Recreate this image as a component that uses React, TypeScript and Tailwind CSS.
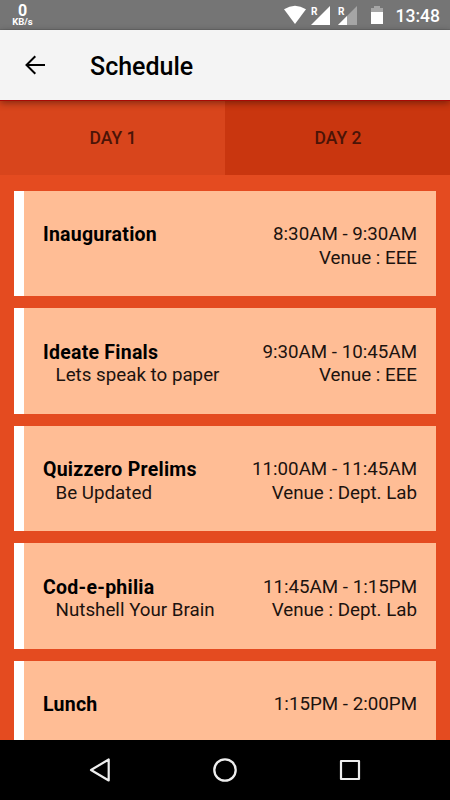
import React from 'react';

type ScheduleItem = {
  title: string;
  subtitle?: string;
  time: string;
  venue?: string;
};

const items: ScheduleItem[] = [
  { title: 'Inauguration', time: '8:30AM - 9:30AM', venue: 'EEE' },
  { title: 'Ideate Finals', subtitle: 'Lets speak to paper', time: '9:30AM - 10:45AM', venue: 'EEE' },
  { title: 'Quizzero Prelims', subtitle: 'Be Updated', time: '11:00AM - 11:45AM', venue: 'Dept. Lab' },
  { title: 'Cod-e-philia', subtitle: 'Nutshell Your Brain', time: '11:45AM - 1:15PM', venue: 'Dept. Lab' },
  { title: 'Lunch', time: '1:15PM - 2:00PM' },
];

const StatusBar: React.FC = () => (
  <div className="flex h-[30px] shrink-0 items-start justify-between border-b border-[#6a6a6a] bg-[#757575] pl-[11px] pr-[10px] text-white">
    <div className="flex w-[23px] flex-col items-center pt-[3px] font-bold">
      <span className="block h-[14px] text-[16px] leading-[16px]">0</span>
      <span className="block h-[10px] text-[9.5px] leading-[10px]">KB/s</span>
    </div>
    <div className="flex items-start">
      <svg className="h-[30px] w-[101px]" viewBox="0 0 101 30">
        <path d="M0 9.3Q11 2.2 22 9.3L11 24Z" fill="#fff" />
        <path d="M46 6v19H27Z" fill="#fff" />
        <path d="M73 6v19H54Z" fill="#a5a5a5" />
        <path d="M54 25l9-9v9Z" fill="#fff" />
        <text x="27" y="15" fontSize="10.5" fontWeight="700" fill="#fff" textLength="6.5" lengthAdjust="spacingAndGlyphs">R</text>
        <text x="54" y="15" fontSize="10.5" fontWeight="700" fill="#fff" textLength="6.5" lengthAdjust="spacingAndGlyphs">R</text>
        <path d="M90 6h6v2h3v4H87V8h3Z" fill="#a5a5a5" />
        <path d="M87 12h12v12H87Z" fill="#fff" />
      </svg>
      <span className="w-[55px] pt-[5px] text-right text-[17.5px] font-medium leading-[22px]">13:48</span>
    </div>
  </div>
);

const Header: React.FC = () => (
  <header className="relative z-10 flex h-[71px] shrink-0 items-center border-b border-[#a80a05] bg-[#f4f4f4] shadow-[0_2px_7px_rgba(0,0,0,0.4)]">
    <svg className="ml-[25px] h-5 w-5" viewBox="0 0 20 20" fill="none" stroke="#000" strokeWidth="2">
      <path d="M20 10H2M10.3 1.2L1.5 10l8.8 8.8" />
    </svg>
    <h1 className="ml-[45px] pt-[4px] text-[25px] font-medium leading-[30px] text-black">Schedule</h1>
  </header>
);

const Tabs: React.FC = () => (
  <div className="flex h-[74px] shrink-0 text-[17.5px] font-medium text-[#4b1407]">
    <button className="flex-1 bg-[#d8451c] pl-px pt-[1px]">DAY 1</button>
    <button className="flex-1 bg-[#c9360f] pl-px pt-[1px]">DAY 2</button>
  </div>
);

const ScheduleCard: React.FC<{ item: ScheduleItem }> = ({ item }) => (
  <div className="flex h-[105.3px] shrink-0 justify-between border-l-10 border-white bg-[#ffbd95] pl-[19.4px] pr-[19.4px] pt-[32.4px] text-[18.75px] leading-[23.5px] text-[#1c130f]">
    <div>
      <h2 className="text-[19.5px] font-bold tracking-[0.25px] text-black">{item.title}</h2>
      {item.subtitle && <p className="pl-[12.6px]">{item.subtitle}</p>}
    </div>
    <div className="text-right">
      <p>{item.time}</p>
      {item.venue && <p>Venue : {item.venue}</p>}
    </div>
  </div>
);

const NavigationBar: React.FC = () => (
  <div className="flex h-[60px] shrink-0 items-center justify-between bg-black px-[87px]">
    <svg className="h-[26px] w-[26px]" viewBox="0 0 26 26" fill="none" stroke="#eee" strokeWidth="2.2" strokeLinejoin="round">
      <path d="M21.7 2.5v21L4 13Z" />
    </svg>
    <svg className="h-[26px] w-[26px]" viewBox="0 0 26 26" fill="none" stroke="#eee" strokeWidth="2.3">
      <circle cx="13" cy="13" r="10.7" />
    </svg>
    <svg className="h-[26px] w-[26px]" viewBox="0 0 26 26" fill="none" stroke="#eee" strokeWidth="2.2" strokeLinejoin="round">
      <path d="M4 4h18v18H4Z" />
    </svg>
  </div>
);

const App: React.FC = () => {
  return (
    <div className="flex h-[800px] w-[450px] flex-col overflow-hidden bg-[#e44b20] font-['Roboto',sans-serif]">
      <StatusBar />
      <Header />
      <Tabs />
      <main className="flex min-h-0 flex-1 flex-col gap-[12.2px] overflow-hidden pl-[13.6px] pr-[13.6px] pt-[16px]">
        {items.map((item) => (
          <ScheduleCard key={item.title} item={item} />
        ))}
      </main>
      <NavigationBar />
    </div>
  );
};

export default App;
